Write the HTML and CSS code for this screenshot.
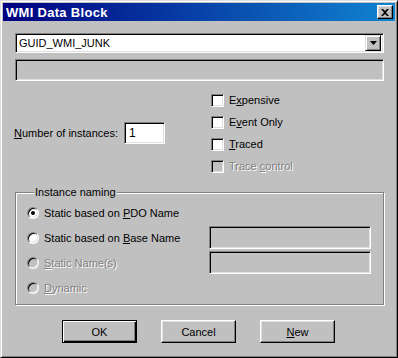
FILE: index.html
```html
<!DOCTYPE html>
<html lang="en">
<head>
  <meta charset="UTF-8" />
  <title>WMI Data Block</title>
  <link rel="stylesheet" href="styles.css">
</head>
<body>
  <div class="window">
    <div class="titlebar">
      <span class="title">WMI Data Block</span>
      <span class="close-btn">
        <svg width="8" height="7" viewBox="0 0 8 7"><path d="M0 0h2l2 2 2-2h2L5 3.5 8 7H6L4 5 2 7H0l3-3.5z" fill="#000"/></svg>
      </span>
    </div>

    <div class="content">
      <div class="combo">
        <span class="combo-text">GUID_WMI_JUNK</span>
        <span class="combo-btn">
          <svg width="7" height="4" viewBox="0 0 7 4"><path d="M0 0h7L3.5 4z" fill="#000"/></svg>
        </span>
      </div>
      <div class="edit edit-wide disabled-field"></div>

      <div class="middle">
        <div class="instances">
          <span class="instances-label"><u>N</u>umber of instances:</span>
          <div class="edit edit-num">1</div>
        </div>
        <div class="checks">
          <div class="check-row"><span class="checkbox"></span><span>E<u>x</u>pensive</span></div>
          <div class="check-row"><span class="checkbox"></span><span>E<u>v</u>ent Only</span></div>
          <div class="check-row"><span class="checkbox"></span><span><u>T</u>raced</span></div>
          <div class="check-row disabled"><span class="checkbox"></span><span>Trace <u>c</u>ontrol</span></div>
        </div>
      </div>

      <div class="group">
        <span class="group-label">Instance naming</span>
        <div class="group-grid">
          <div class="radio-row"><span class="radio checked"></span><span>Static based on <u>P</u>DO Name</span></div>
          <div></div>
          <div class="radio-row"><span class="radio"></span><span>Static based on <u>B</u>ase Name</span></div>
          <div class="cell"><div class="edit edit-side disabled-field"></div></div>
          <div class="radio-row disabled"><span class="radio"></span><span><u>S</u>tatic Name(s)</span></div>
          <div class="cell"><div class="edit edit-side disabled-field"></div></div>
          <div class="radio-row disabled"><span class="radio"></span><span><u>D</u>ynamic</span></div>
          <div></div>
        </div>
      </div>

      <div class="buttons">
        <button class="btn btn-default">OK</button>
        <button class="btn">Cancel</button>
        <button class="btn"><u>N</u>ew</button>
      </div>
    </div>
  </div>
</body>
</html>
```

FILE: styles.css
```css
* {
  box-sizing: border-box;
}
body {
  margin: 0;
  background: #c0c0c0;
  font-family: "Liberation Sans", Arial, sans-serif;
  font-size: 11px;
  color: #000;
}
.window {
  width: 398px;
  height: 358px;
  padding: 2px;
  background: #c0c0c0;
  border: 1px solid;
  border-color: #dfdfdf #000 #000 #dfdfdf;
  box-shadow: inset 1px 1px #fff, inset -1px -1px #808080;
}
.titlebar {
  height: 18px;
  display: flex;
  align-items: center;
  justify-content: space-between;
  padding: 0 2px 0 3px;
  background: linear-gradient(to right, #000080, #1084d0);
}
.title {
  color: #fff;
  font-weight: bold;
  font-size: 13px;
  letter-spacing: 0.3px;
}
.close-btn {
  width: 16px;
  height: 14px;
  display: flex;
  align-items: center;
  justify-content: center;
  background: #c0c0c0;
  border: 1px solid;
  border-color: #fff #000 #000 #fff;
  box-shadow: inset -1px -1px #808080, inset 1px 1px #dfdfdf;
}

.content {
  padding: 0 11px 0 12px;
}
.edit,
.combo {
  background: #fff;
  border: 1px solid;
  border-color: #808080 #fff #fff #808080;
  box-shadow: inset 1px 1px #000, inset -1px -1px #dfdfdf;
}
.combo {
  margin-top: 12px;
  height: 20px;
  display: flex;
  align-items: center;
  padding: 1px 2px 1px 3px;
}
.combo-btn {
  margin-left: auto;
  width: 16px;
  height: 16px;
  display: flex;
  align-items: center;
  justify-content: center;
  background: #c0c0c0;
  border: 1px solid;
  border-color: #dfdfdf #000 #000 #dfdfdf;
  box-shadow: inset 1px 1px #fff, inset -1px -1px #808080;
}
.disabled-field {
  background: #c0c0c0;
}
.edit-wide {
  margin-top: 6px;
  height: 22px;
}

.middle {
  display: flex;
  margin-top: 8px;
  height: 88px;
}
.instances {
  width: 196px;
  display: flex;
  align-items: center;
}
.instances-label {
  width: 110px;
  margin-left: -1px;
}
.edit-num {
  width: 41px;
  height: 22px;
  padding: 3px 4px;
  font-size: 12px;
}
.checks {
  display: flex;
  flex-direction: column;
}
.check-row {
  height: 22px;
  display: flex;
  align-items: center;
}
.checkbox {
  width: 13px;
  height: 13px;
  margin-right: 5px;
  background: #fff;
  border: 1px solid;
  border-color: #808080 #fff #fff #808080;
  box-shadow: inset 1px 1px #000, inset -1px -1px #dfdfdf;
}
.disabled {
  color: #808080;
  text-shadow: 1px 1px #fff;
}
.disabled .checkbox,
.disabled .radio {
  background: #c0c0c0;
}

.group {
  margin-top: 15px;
  height: 113px;
  border: 1px solid #808080;
  box-shadow: inset 1px 1px #fff, 1px 1px #fff;
  padding: 0 12px 0 11px;
}
.group-label {
  display: table;
  margin: -7px 0 0 7px;
  padding: 0 1px;
  line-height: 13px;
  background: #c0c0c0;
}
.group-grid {
  margin-top: 1px;
  display: grid;
  grid-template-columns: 1fr 162px;
  grid-auto-rows: 25px;
}
.radio-row {
  display: flex;
  align-items: center;
}
.cell {
  display: flex;
  align-items: center;
}
.radio {
  width: 12px;
  height: 12px;
  margin-right: 5px;
  border-radius: 50%;
  display: flex;
  align-items: center;
  justify-content: center;
  background: #fff;
  border: 1px solid;
  border-color: #808080 #fff #fff #808080;
  box-shadow: inset 1px 1px #000, inset -1px -1px #dfdfdf;
}
.radio.checked::after {
  content: "";
  width: 4px;
  height: 4px;
  border-radius: 50%;
  background: #000;
}
.edit-side {
  width: 162px;
  height: 23px;
}

.buttons {
  margin-top: 15px;
  display: flex;
  justify-content: center;
  gap: 24px;
  padding-right: 2px;
}
.btn {
  width: 75px;
  height: 23px;
  padding: 0;
  font-family: inherit;
  font-size: 11px;
  color: #000;
  background: #c0c0c0;
  border: 1px solid;
  border-color: #fff #000 #000 #fff;
  box-shadow: inset -1px -1px #808080, inset 1px 1px #dfdfdf;
}
.btn-default {
  border-color: #000;
  box-shadow: inset 1px 1px #fff, inset -1px -1px #000, inset -2px -2px #808080;
}
```
